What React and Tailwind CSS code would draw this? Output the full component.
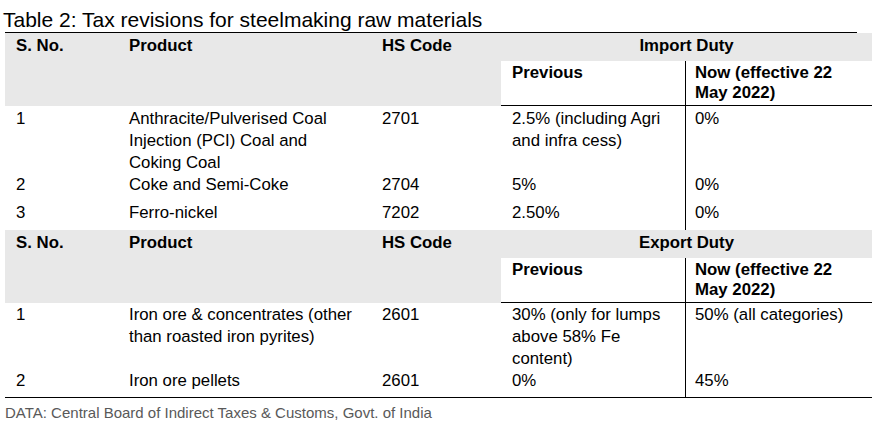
import React from "react";

// Table 2 - tax revisions (import / export duty)
const importRows = [
  { no: "1", product: ["Anthracite/Pulverised Coal", "Injection (PCI) Coal and", "Coking Coal"], hs: "2701", prev: ["2.5% (including Agri", "and infra cess)"], now: ["0%"], pad: "pt-[2px]" },
  { no: "2", product: ["Coke and Semi-Coke"], hs: "2704", prev: ["5%"], now: ["0%"], pad: "pb-[6px]" },
  { no: "3", product: ["Ferro-nickel"], hs: "7202", prev: ["2.50%"], now: ["0%"], pad: "pb-[6px]" },
];

const exportRows = [
  { no: "1", product: ["Iron ore & concentrates (other", "than roasted iron pyrites)"], hs: "2601", prev: ["30% (only for lumps", "above 58% Fe", "content)"], now: ["50% (all categories)"], pad: "pt-[1px]" },
  { no: "2", product: ["Iron ore pellets"], hs: "2601", prev: ["0%"], now: ["45%"], pad: "pb-[5px]" },
];

function Lines({ lines }) {
  return lines.map((l, i) => (
    <div key={i} className="whitespace-nowrap">{l}</div>
  ));
}

function Section({ title, rows }) {
  return (
    <div className="grid grid-cols-[112px_254px_130px_185px_186px] ml-[5px]">
      <div className="row-span-2 bg-[#e8e8e8] pl-[11px] pt-[2px] font-bold leading-[22px]">S. No.</div>
      <div className="row-span-2 bg-[#e8e8e8] pl-[12px] pt-[2px] font-bold leading-[22px]">Product</div>
      <div className="row-span-2 bg-[#e8e8e8] pl-[11px] pt-[2px] font-bold leading-[22px]">HS Code</div>
      <div className="col-span-2 bg-[#e8e8e8] pt-[2px] pb-[4px] text-center font-bold leading-[22px]">{title}</div>
      <div className="border-r border-b border-black pl-[11px] pt-[2px] pb-[2px] font-bold leading-[20px]">Previous</div>
      <div className="border-b border-black pl-[9px] pt-[2px] pb-[2px] font-bold leading-[20px]">
        <Lines lines={["Now (effective 22", "May 2022)"]} />
      </div>
      {rows.map((r) => (
        <React.Fragment key={r.no}>
          <div className={`pl-[11px] leading-[22px] ${r.pad}`}>{r.no}</div>
          <div className={`pl-[12px] leading-[22px] ${r.pad}`}><Lines lines={r.product} /></div>
          <div className={`pl-[11px] leading-[22px] ${r.pad}`}>{r.hs}</div>
          <div className={`border-r border-black pl-[11px] leading-[22px] ${r.pad}`}><Lines lines={r.prev} /></div>
          <div className={`pl-[9px] leading-[22px] ${r.pad}`}><Lines lines={r.now} /></div>
        </React.Fragment>
      ))}
    </div>
  );
}

export default function App() {
  return (
    <div className="w-[876px] h-[426px] overflow-hidden bg-white text-black font-['Liberation_Sans',Arial,sans-serif] text-[16.8px]">
      <div className="pl-[3px] pt-[8px] text-[21px] leading-[24px] whitespace-nowrap">Table 2: Tax revisions for steelmaking raw materials</div>
      <div className="ml-[5px] w-[852px] h-px bg-black" />
      <Section title="Import Duty" rows={importRows} />
      <Section title="Export Duty" rows={exportRows} />
      <div className="ml-[5px] w-[867px] h-px bg-black" />
      <div className="pl-[5px] pt-[5px] text-[15px] leading-[20px] text-[#595959] whitespace-nowrap">DATA: Central Board of Indirect Taxes &amp; Customs, Govt. of India</div>
    </div>
  );
}
